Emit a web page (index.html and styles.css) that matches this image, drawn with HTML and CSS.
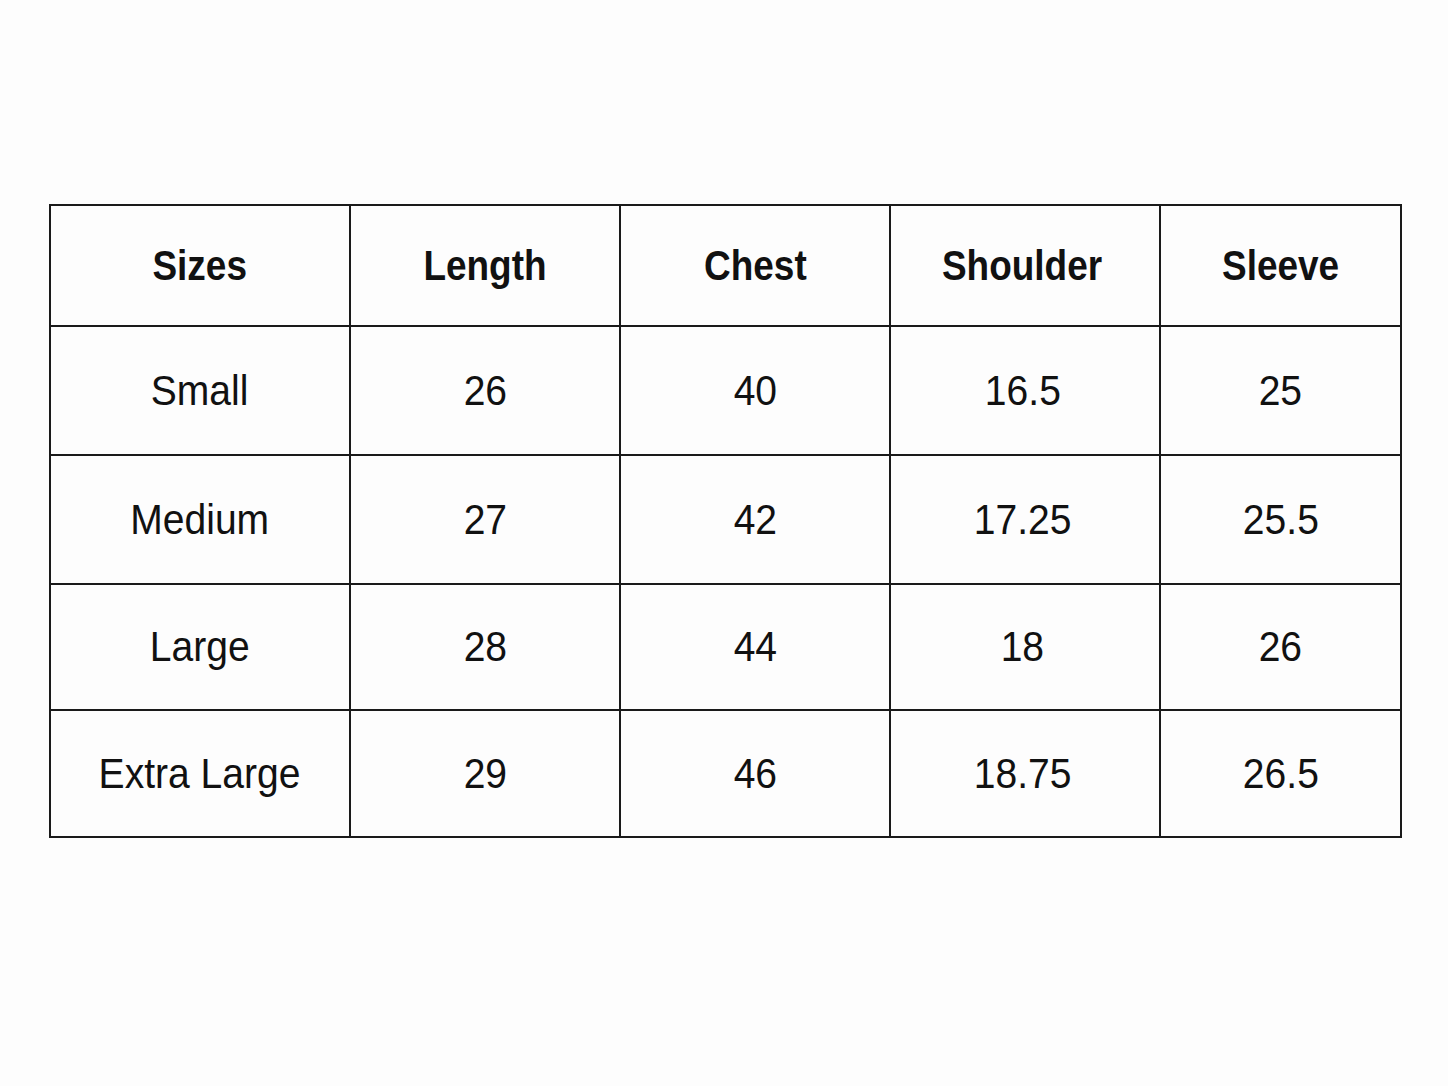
FILE: index.html
```html
<!DOCTYPE html>
<html>
<head>
<meta charset="utf-8">
<link rel="stylesheet" href="styles.css">
</head>
<body>
<main class="page">
<table class="sizes">
<colgroup>
<col class="c1"><col class="c2"><col class="c3"><col class="c4"><col class="c5">
</colgroup>
<thead>
<tr class="head"><th><span>Sizes</span></th><th><span>Length</span></th><th><span>Chest</span></th><th><span>Shoulder</span></th><th><span>Sleeve</span></th></tr>
</thead>
<tbody>
<tr class="r1"><td><span>Small</span></td><td><span>26</span></td><td><span>40</span></td><td><span>16.5</span></td><td><span>25</span></td></tr>
<tr class="r2"><td><span>Medium</span></td><td><span>27</span></td><td><span>42</span></td><td><span>17.25</span></td><td><span>25.5</span></td></tr>
<tr class="r3"><td><span>Large</span></td><td><span>28</span></td><td><span>44</span></td><td><span>18</span></td><td><span>26</span></td></tr>
<tr class="r4"><td><span>Extra Large</span></td><td><span>29</span></td><td><span>46</span></td><td><span>18.75</span></td><td><span>26.5</span></td></tr>
</tbody>
</table>
</main>
</body>
</html>
```
FILE: styles.css
```css
html, body {
  margin: 0;
  padding: 0;
  background: #fdfdfd;
}
.page {
  padding: 204px 0 0 49px;
}
.sizes {
  border-collapse: collapse;
  table-layout: fixed;
  width: 1351px;
  font-family: "Liberation Sans", Arial, sans-serif;
  color: #111;
}
.c1 { width: 300px; }
.c2 { width: 270px; }
.c3 { width: 270px; }
.c4 { width: 270px; }
.c5 { width: 241px; }
.sizes th, .sizes td {
  border: 2px solid #1a1a1a;
  text-align: center;
  vertical-align: middle;
  padding: 0;
  font-size: 42px;
  line-height: 1;
}
.sizes th { font-weight: bold; }
.sizes td { font-weight: normal; }
.sizes th span {
  display: inline-block;
  transform: scaleX(0.88);
}
.sizes td span {
  display: inline-block;
  transform: scaleX(0.93);
}
.c4 { }
.sizes th:nth-child(4) span,
.sizes td:nth-child(4) span {
  margin-right: 5px;
}
.head { height: 121px; }
.r1 { height: 129px; }
.r2 { height: 129px; }
.r3 { height: 126px; }
.r4 { height: 127px; }
```
